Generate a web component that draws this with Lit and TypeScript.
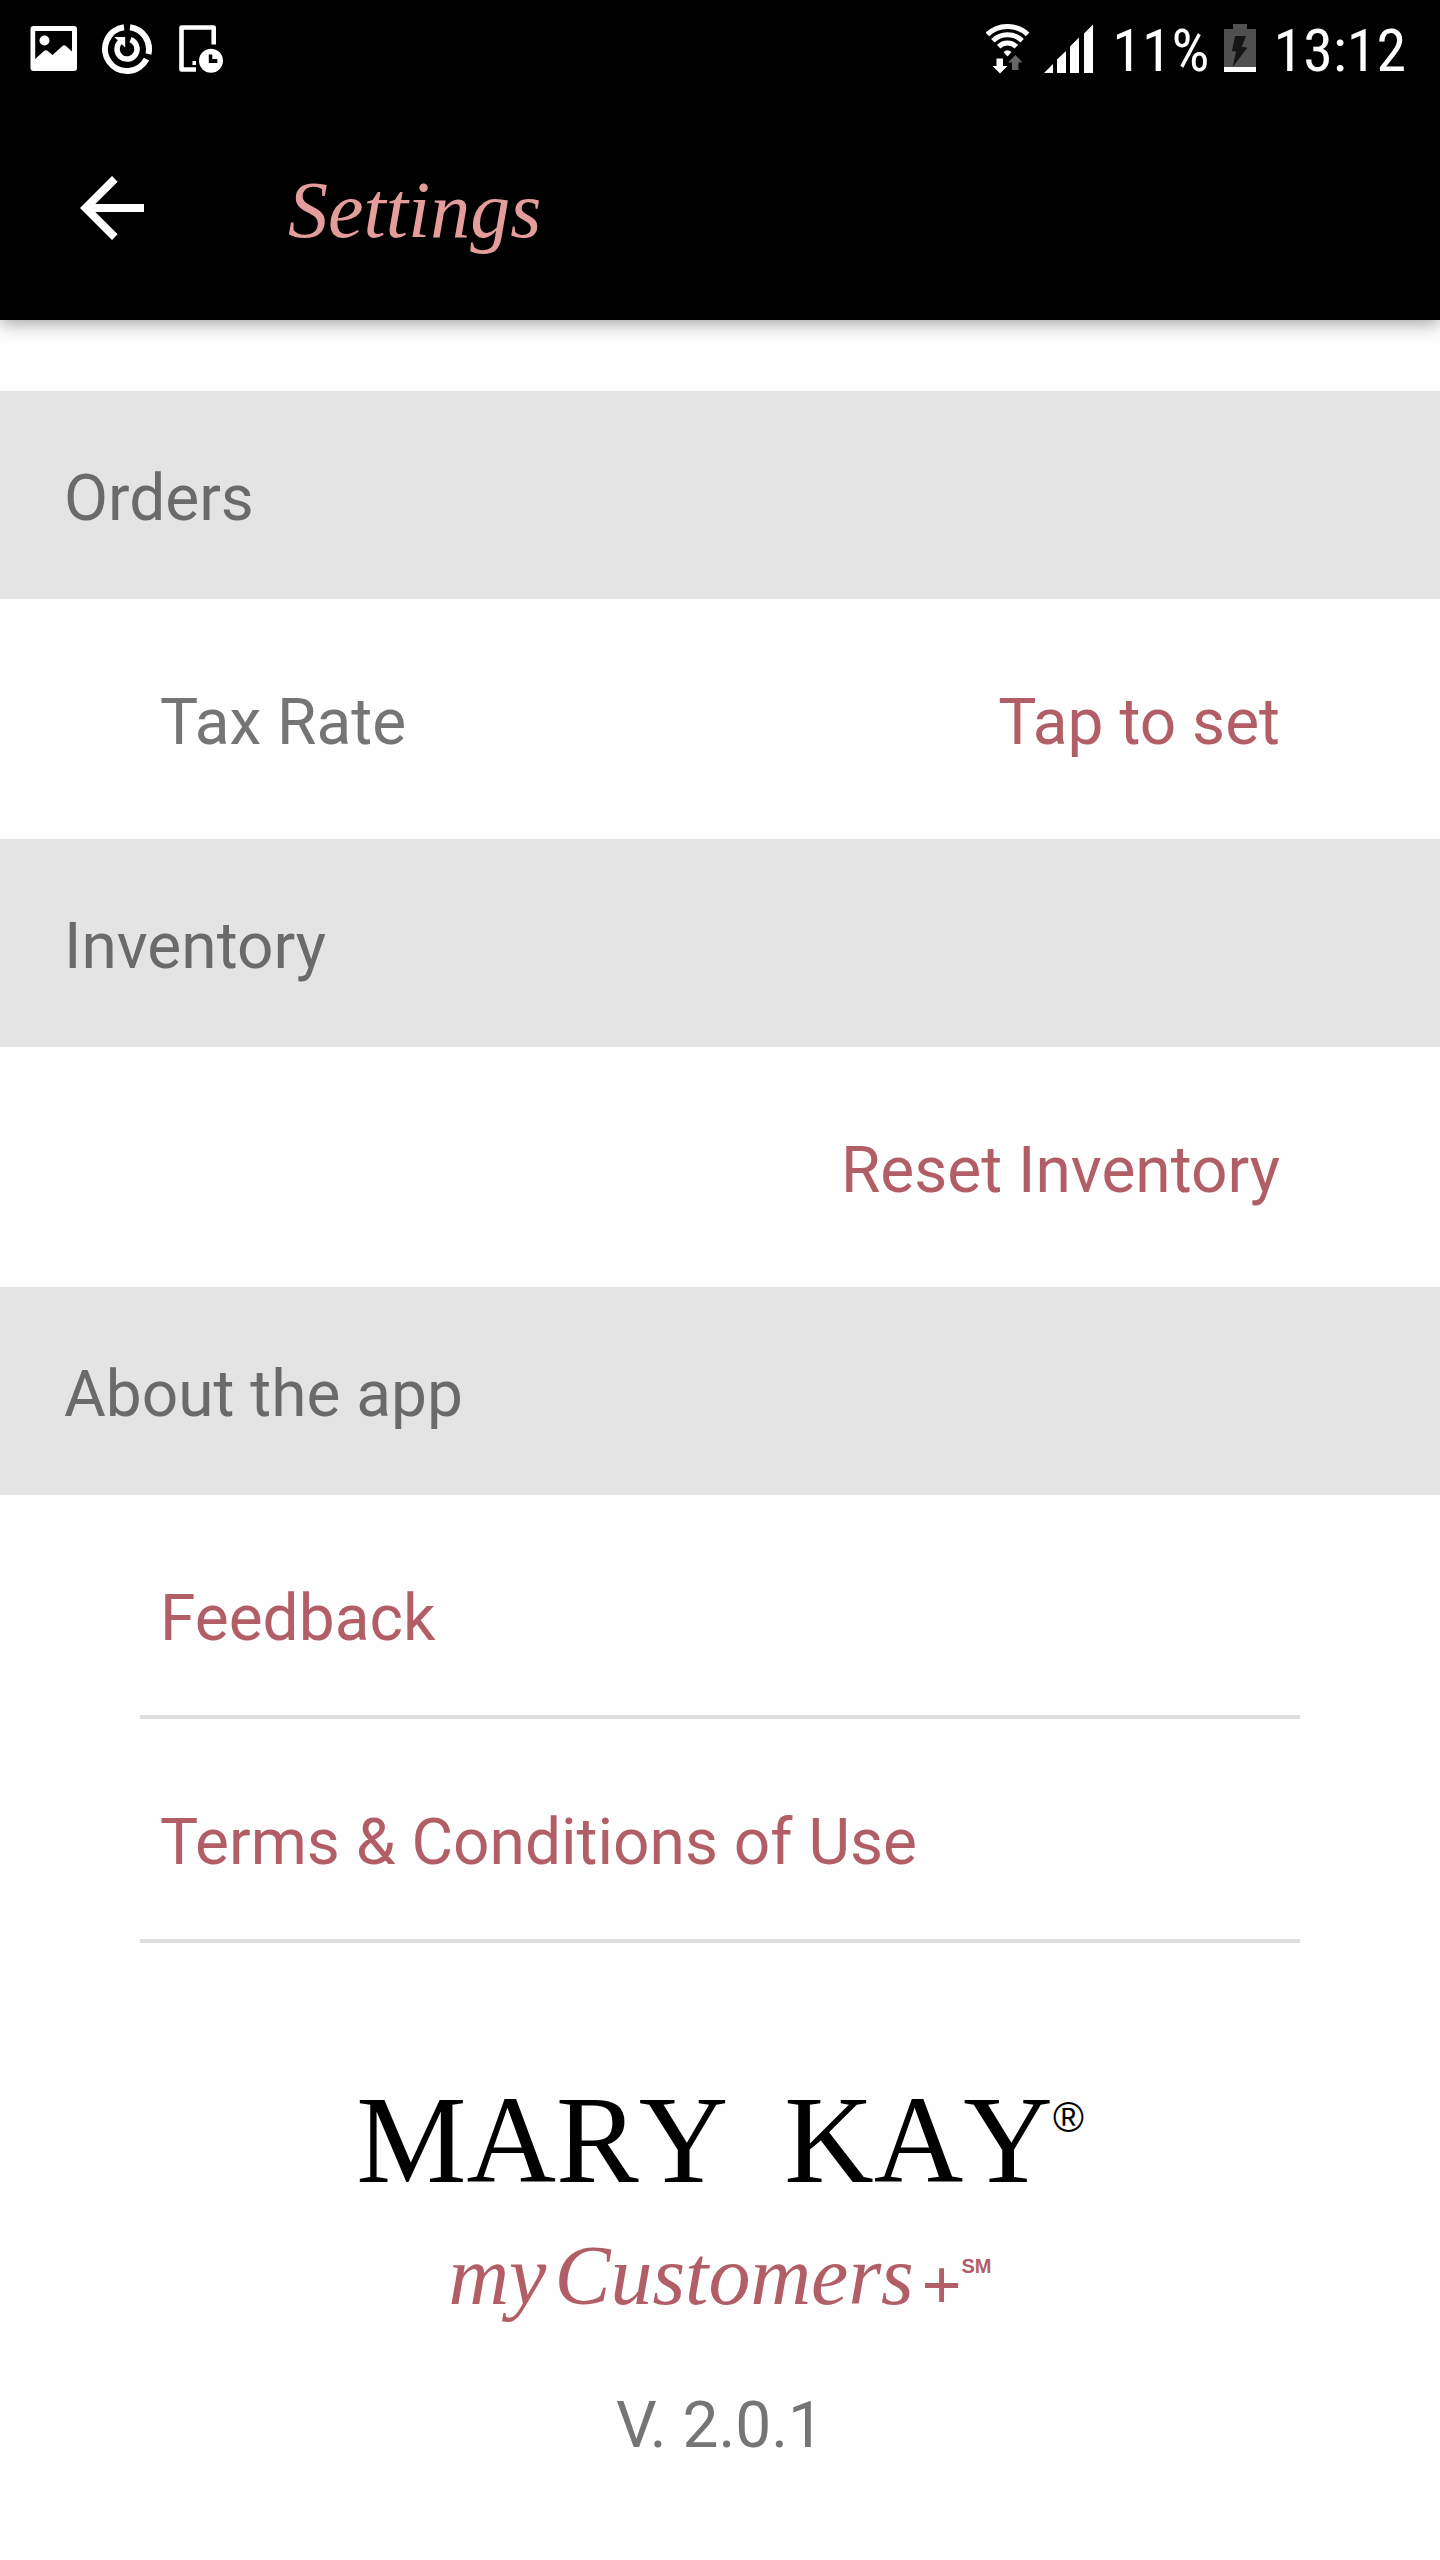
import { LitElement, html, css } from "lit";
import { customElement } from "lit/decorators.js";

@customElement("status-bar")
class StatusBar extends LitElement {
  static styles = css`
    :host {
      display: flex;
      align-items: center;
      justify-content: space-between;
      height: 98px;
      padding: 0 34px 0 30px;
      color: #fff;
      font-family: "Roboto Condensed", Roboto, sans-serif;
      font-size: 60px;
      line-height: 70px;
    }
    .group {
      display: flex;
      align-items: center;
    }
    .notices {
      gap: 25px;
    }
    .system {
      gap: 14px;
    }
    svg {
      display: block;
      flex: none;
    }
    .text {
      padding: 4px 0 0 4px;
    }
  `;

  render() {
    return html`
      <div class="group notices">
        <svg width="47" height="46" viewBox="0 0 47 46" role="img" aria-label="Image">
          <path fill="#fff" fill-rule="evenodd"
            d="M3.500 0H44a3 3 0 0 1 3 3V42a3 3 0 0 1-3 3H3.500a3 3 0 0 1-3-3V3a3 3 0 0 1 3-3zM5.200 5V33L14.200 24.800Q15.800 23.500 17.500 24.800L22.500 29L32.500 20Q34.200 18.600 35.900 20L42 25.500V5z" />
          <circle cx="14.500" cy="14.500" r="5" fill="#fff" />
        </svg>
        <svg width="52" height="50" viewBox="0 0 52 50" role="img" aria-label="Sync">
          <g fill="none" stroke="#fff">
            <path stroke-width="6" d="M28 3.200A22 22 0 0 1 46.400 30M44.500 35.200A22 22 0 1 1 22 3.200" />
            <path stroke-width="5.500" d="M28.500 15.700A10 10 0 1 1 18.500 17.500" />
          </g>
          <path fill="#fff" d="M12.300 13H23.200V23.500z" />
        </svg>
        <svg width="45" height="48" viewBox="0 0 45 48" role="img" aria-label="Device schedule">
          <path fill="none" stroke="#fff" stroke-width="4.600" stroke-linejoin="round"
            d="M34.700 19.500V2.500H2.500V44.500H17" />
          <path fill="#fff" d="M13.500 36h3.500v4h-3.500z" />
          <circle cx="32" cy="35.700" r="12" fill="#fff" />
          <path d="M29.800 29.500h3.500v4.500h5v4h-8.500z" />
        </svg>
      </div>
      <div class="group system">
        <svg width="44" height="50" viewBox="0 0 44 50" role="img" aria-label="Wi-Fi">
          <g fill="none" stroke="#fff" stroke-width="5">
            <path d="M1.400 10.400A29.500 29.500 0 0 1 41.600 10.400" />
            <path d="M6.900 16.700A21 21 0 0 1 36.100 16.700" />
            <path d="M12.700 22.700A12.500 12.500 0 0 1 30.300 22.700" />
          </g>
          <path fill="#fff" d="M17.500 28Q21.500 24.500 25.500 28L21.500 32.500z" />
          <path fill="#fff" d="M10.500 34.500h6.500v7.500h4.500L14 49.500L6.500 42h4z" />
          <path fill="#666" d="M29.500 31L36.500 38.500H32.500V46h-6.500V38.500h-4z" />
        </svg>
        <svg width="50" height="50" viewBox="0 0 50 50" role="img" aria-label="Signal">
          <path fill="#fff"
            d="M0 49L9 40V49zM13 49V35.500L22 27V49zM26 49V22.500L35 13.500V49zM40 49V9.500L49 .500V49z" />
        </svg>
        <span class="text">11%</span>
        <svg width="32" height="50" viewBox="0 0 32 50" role="img" aria-label="Charging">
          <path fill="#505050" d="M9 0h14v5h9v38H0V5h9z" />
          <path fill="#fff" d="M0 43h32v5H0z" />
          <path fill="#151515" d="M11 12h11L17.700 22.700L23.300 23.700L8.700 43L12 27.700L8 27z" />
        </svg>
        <span class="text">13:12</span>
      </div>
    `;
  }
}

@customElement("brand-mark")
class BrandMark extends LitElement {
  static styles = css`
    :host {
      display: flex;
      flex-direction: column;
      align-items: center;
      gap: 33px;
    }
    .line {
      display: flex;
      align-items: flex-start;
    }
    .company {
      color: #000;
      font-family: "Liberation Serif", serif;
      font-size: 124px;
      line-height: 120px;
      font-kerning: none;
    }
    .words {
      display: flex;
      gap: 56px;
    }
    .registered {
      padding-top: 16px;
      font-family: "Liberation Sans", sans-serif;
      font-size: 42px;
      line-height: 42px;
    }
    .product {
      color: #b25e66;
      font-family: "Liberation Serif", serif;
      font-size: 84px;
      line-height: 84px;
    }
    .name {
      display: flex;
      gap: 8px;
      font-style: italic;
    }
    .plus {
      padding-top: 20px;
      font-family: "Liberation Sans", sans-serif;
      font-style: normal;
      font-size: 68px;
      line-height: 60px;
    }
    .service {
      padding-top: 22px;
      font-family: "Liberation Sans", sans-serif;
      font-size: 20px;
      line-height: 20px;
      font-weight: bold;
    }
  `;

  render() {
    return html`
      <div class="line company">
        <span class="words"><span>MARY</span><span>KAY</span></span>
        <span class="registered">®</span>
      </div>
      <div class="line product">
        <span class="name"><span>my</span><span>Customers</span><span class="plus">+</span></span>
        <span class="service">SM</span>
      </div>
    `;
  }
}

@customElement("app-root")
class AppRoot extends LitElement {
  static styles = css`
    :host {
      display: block;
      min-height: 100vh;
      background: #fefefe;
      color: #757575;
      font-family: Roboto, sans-serif;
      font-size: 64px;
      line-height: 76px;
    }
    .top {
      background: #000;
      box-shadow: 0 4px 16px rgba(0, 0, 0, 0.35);
    }
    .bar {
      display: flex;
      align-items: center;
      gap: 128px;
      height: 220px;
      padding: 0 64px 2px;
    }
    h1,
    h2,
    p {
      margin: 0;
      font-weight: 400;
    }
    h1 {
      padding-top: 4px;
      color: #e59d9b;
      font-family: "Liberation Serif", serif;
      font-style: italic;
      font-size: 80px;
      line-height: 92px;
    }
    h2 {
      padding: 70px 64px 62px;
      background: #e4e4e4;
      color: #6a6a6a;
      font-size: 64px;
      line-height: 76px;
    }
    button {
      padding: 0;
      border: 0;
      background: none;
      font: inherit;
      color: #b25e66;
      cursor: pointer;
    }
    .back {
      flex: none;
      width: 96px;
      height: 96px;
    }
    .back svg {
      display: block;
    }
    main {
      padding-top: 71px;
    }
    .row {
      display: flex;
      justify-content: space-between;
      padding: 86px 160px 78px;
    }
    .end {
      justify-content: flex-end;
    }
    .links {
      padding: 0 140px;
    }
    .link {
      display: block;
      padding: 86px 20px 58px;
      border-bottom: 4px solid #dfdfdf;
      color: #b25e66;
      text-decoration: none;
    }
    .about {
      display: flex;
      flex-direction: column;
      align-items: center;
      gap: 70px;
      padding: 138px 64px 90px;
    }
  `;

  render() {
    return html`
      <header class="top">
        <status-bar></status-bar>
        <div class="bar">
          <button class="back" aria-label="Back">
            <svg width="96" height="96" viewBox="0 0 24 24" aria-hidden="true">
              <path fill="#fff" d="M20 11H7.830l5.590-5.590L12 4l-8 8 8 8 1.410-1.410L7.830 13H20v-2z" />
            </svg>
          </button>
          <h1>Settings</h1>
        </div>
      </header>
      <main>
        <section>
          <h2>Orders</h2>
          <div class="row">
            <span id="tax">Tax Rate</span>
            <button aria-describedby="tax">Tap to set</button>
          </div>
        </section>
        <section>
          <h2>Inventory</h2>
          <div class="row end"><button>Reset Inventory</button></div>
        </section>
        <section>
          <h2>About the app</h2>
          <nav class="links">
            <a class="link" href="#feedback">Feedback</a>
            <a class="link" href="#terms">Terms &amp; Conditions of Use</a>
          </nav>
          <div class="about">
            <brand-mark></brand-mark>
            <p>V. 2.0.1</p>
          </div>
        </section>
      </main>
    `;
  }
}
